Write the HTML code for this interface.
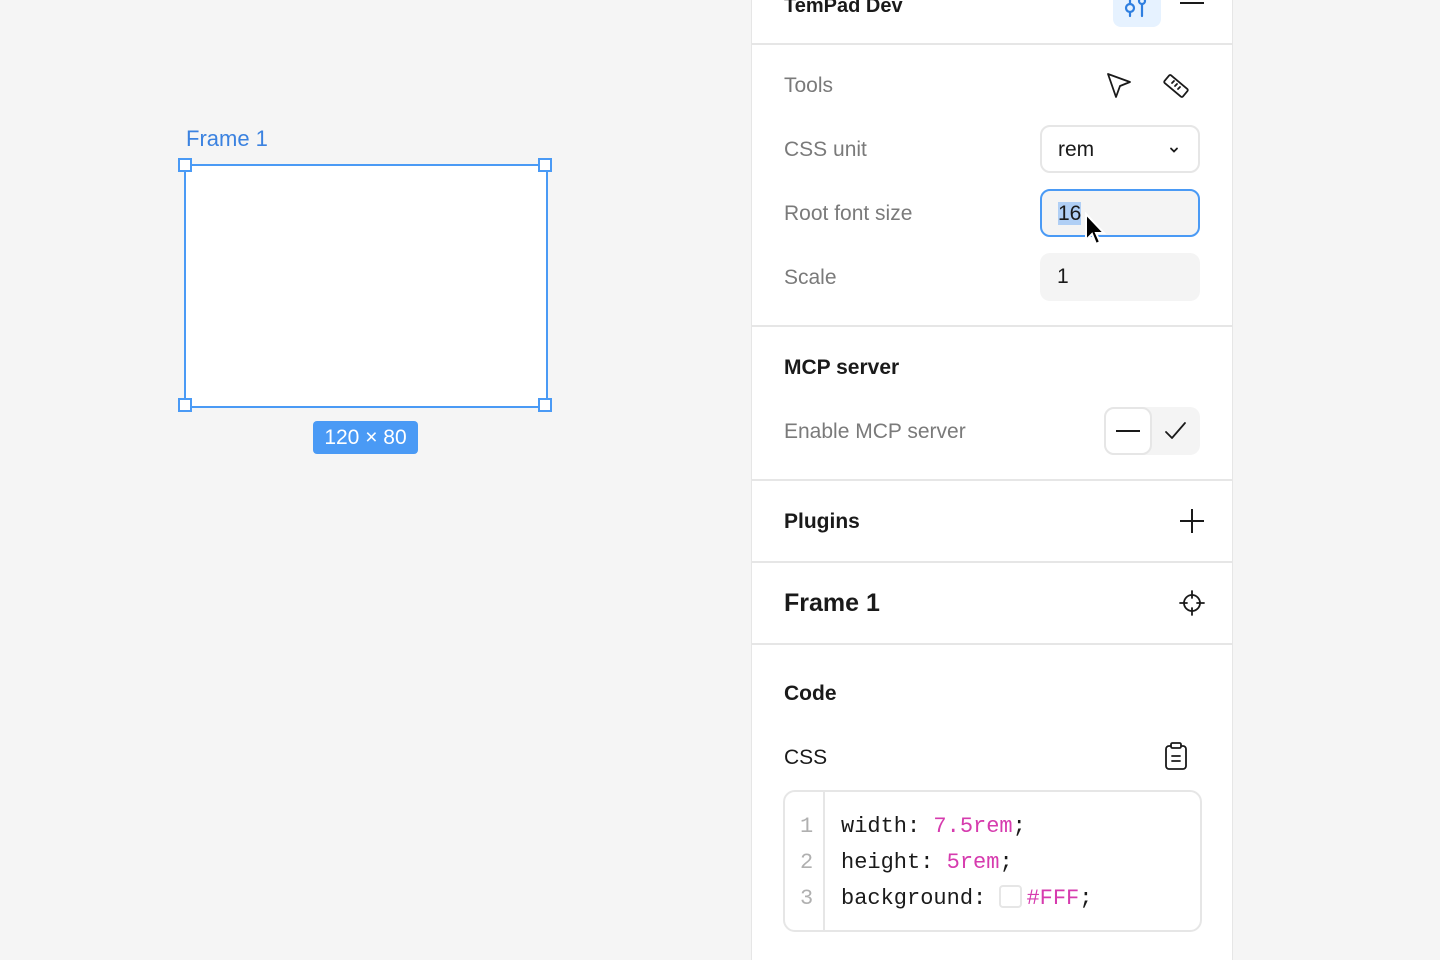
<!DOCTYPE html>
<html><head><meta charset="utf-8">
<style>
*{box-sizing:border-box;margin:0;padding:0}
body{width:1440px;height:960px;background:#f5f5f5;font-family:"Liberation Sans",sans-serif;position:relative;overflow:hidden;color:#1a1a1a}
.abs{position:absolute}
.panel{position:absolute;left:751px;top:0;width:482px;height:960px;background:#fff;border-left:1px solid #e6e6e6;border-right:1px solid #e6e6e6}
.hr{position:absolute;left:0;width:480px;height:2px;background:#e6e6e6}
.lbl{position:absolute;left:32px;font-size:21px;color:#7a7a7a}
.h{position:absolute;left:32px;font-size:21px;font-weight:bold;color:#1a1a1a}
.inp{position:absolute;left:288px;width:160px;height:48px;border-radius:10px;font-size:21px;padding-left:16px;line-height:46px}
.code{font-family:"Liberation Mono",monospace;font-size:22px}
.m{color:#d63bae}
.handle{position:absolute;width:14px;height:14px;background:#fff;border:2px solid #4a9af5}
</style></head><body>
<div class="abs" style="left:186px;top:126px;font-size:22px;color:#3b82e0">Frame 1</div>
<div class="abs" style="left:184px;top:164px;width:364px;height:244px;background:#fff;border:2px solid #4a9af5"></div>
<div class="handle" style="left:178px;top:158px"></div>
<div class="handle" style="left:538px;top:158px"></div>
<div class="handle" style="left:178px;top:398px"></div>
<div class="handle" style="left:538px;top:398px"></div>
<div class="abs" style="left:313px;top:421px;width:105px;height:33px;background:#4a9af5;border-radius:4px;color:#fff;font-size:21px;text-align:center;line-height:33px">120 × 80</div>

<div class="panel">
  <div class="abs" style="left:32px;top:-5px;font-size:20px;font-weight:bold">TemPad Dev</div>
  <div class="abs" style="left:361px;top:-10px;width:48px;height:37px;background:#e6f2ff;border-radius:8px">
    <svg width="48" height="37" viewBox="0 0 48 37" fill="none" stroke="#2f7fe0" stroke-width="2.2" stroke-linecap="round"><circle cx="17" cy="18" r="4"/><line x1="17" y1="10" x2="17" y2="14"/><line x1="17" y1="22" x2="17" y2="26"/><circle cx="29" cy="11" r="3"/><line x1="29" y1="14" x2="29" y2="26"/></svg>
  </div>
  <div class="abs" style="left:428px;top:2px;width:24px;height:2px;background:#1a1a1a"></div>
  <div class="hr" style="top:43px"></div>

  <div class="lbl" style="top:74px">Tools</div>
  <svg class="abs" style="left:352px;top:70px" width="32" height="32" viewBox="0 0 32 32" fill="none" stroke="#1a1a1a" stroke-width="1.8" stroke-linejoin="round"><path d="M4 4 L26 12 L16 16 L12 27 Z"/></svg>
  <svg class="abs" style="left:408px;top:70px" width="32" height="32" viewBox="0 0 32 32" fill="none" stroke="#1a1a1a" stroke-width="1.8" stroke-linejoin="round"><rect x="4" y="11" width="24" height="10" rx="1.5" transform="rotate(40 16 16)"/><path d="M12 13 l2 -2 M15 16 l2 -2 M18 19 l2 -2" stroke-linecap="round"/></svg>

  <div class="lbl" style="top:138px">CSS unit</div>
  <div class="inp" style="top:125px;border:2px solid #e6e6e6;color:#1a1a1a">rem
    <svg class="abs" style="left:126px;top:17px" width="12" height="12" viewBox="0 0 12 12" fill="none" stroke="#1a1a1a" stroke-width="1.8" stroke-linecap="round"><path d="M3 4.5 L6 7.5 L9 4.5"/></svg>
  </div>

  <div class="lbl" style="top:202px">Root font size</div>
  <div class="inp" style="top:189px;border:2px solid #4a9af5;background:#f4f4f4;color:#1a1a1a"><span style="background:#b0cff5">16</span></div>
  <svg class="abs" style="left:331px;top:212px" width="24" height="36" viewBox="0 0 24 36"><path d="M3 2 L3 28 L9 22 L13 32 L17 30 L13 21 L21 21 Z" fill="#000" stroke="#fff" stroke-width="2"/></svg>

  <div class="lbl" style="top:266px">Scale</div>
  <div class="inp" style="top:253px;background:#f4f4f4;color:#1a1a1a;padding-left:17px;line-height:48px">1</div>
  <div class="hr" style="top:325px"></div>

  <div class="h" style="top:356px">MCP server</div>
  <div class="lbl" style="top:420px">Enable MCP server</div>
  <div class="abs" style="left:352px;top:407px;width:96px;height:48px;background:#f4f4f4;border-radius:10px"></div>
  <div class="abs" style="left:352px;top:407px;width:48px;height:48px;background:#fff;border:2px solid #e6e6e6;border-radius:10px"></div>
  <div class="abs" style="left:364px;top:430px;width:24px;height:2px;background:#1a1a1a"></div>
  <svg class="abs" style="left:411px;top:418px" width="26" height="26" viewBox="0 0 26 26" fill="none" stroke="#1a1a1a" stroke-width="1.8" stroke-linecap="round" stroke-linejoin="round"><path d="M3 14 L9 20 L22 5"/></svg>
  <div class="hr" style="top:479px"></div>

  <div class="h" style="top:510px">Plugins</div>
  <svg class="abs" style="left:426px;top:507px" width="28" height="28" viewBox="0 0 28 28" stroke="#1a1a1a" stroke-width="2"><path d="M14 2 V26 M2 14 H26"/></svg>
  <div class="hr" style="top:561px"></div>

  <div class="h" style="top:589px;font-size:25px">Frame 1</div>
  <svg class="abs" style="left:426px;top:589px" width="28" height="28" viewBox="0 0 28 28" fill="none" stroke="#1a1a1a" stroke-width="1.8" stroke-linecap="round"><circle cx="14" cy="14" r="8"/><path d="M14 2 V9 M14 19 V26 M2 14 H9 M19 14 H26"/></svg>
  <div class="hr" style="top:643px"></div>

  <div class="h" style="top:682px">Code</div>
  <div class="abs" style="left:32px;top:746px;font-size:21px;color:#1a1a1a">CSS</div>
  <svg class="abs" style="left:410px;top:741px" width="28" height="30" viewBox="0 0 28 30" fill="none" stroke="#1a1a1a" stroke-width="1.8" stroke-linecap="round" stroke-linejoin="round"><rect x="4" y="5" width="20" height="23" rx="3"/><rect x="9" y="2" width="10" height="5" rx="1.5" fill="#fff"/><path d="M10 15 H18 M10 20 H18"/></svg>

  <div class="abs" style="left:31px;top:790px;width:419px;height:142px;border:2px solid #e6e6e6;border-radius:12px">
    <div class="abs" style="left:38px;top:0;width:2px;height:138px;background:#e6e6e6"></div>
    <div class="abs code" style="left:15px;top:17px;line-height:36px;color:#b0b0b0">1<br>2<br>3</div>
    <div class="abs code" style="left:56px;top:17px;line-height:36px;white-space:pre;color:#1a1a1a">width: <span class="m">7.5rem</span>;
height: <span class="m">5rem</span>;
background: <span style="display:inline-block;width:23px;height:23px;border:2px solid #e6e6e6;border-radius:4px;vertical-align:-4px;margin-right:4px"></span><span class="m">#FFF</span>;</div>
  </div>
</div>
</body></html>
